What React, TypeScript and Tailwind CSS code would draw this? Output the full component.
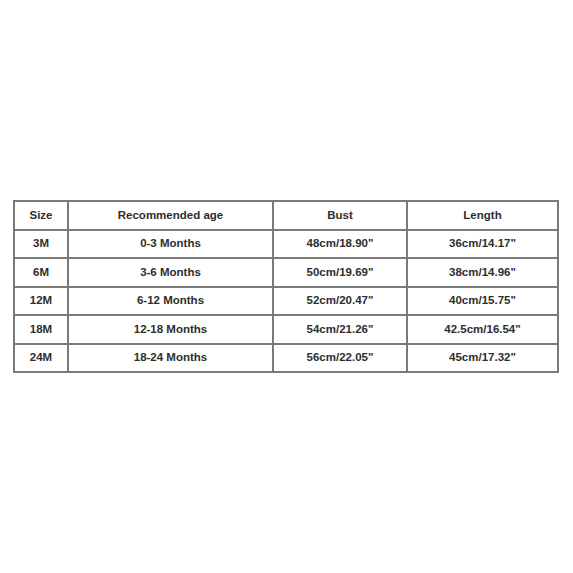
const rows = [
  ['3M', '0-3 Months', '48cm/18.90"', '36cm/14.17"'],
  ['6M', '3-6 Months', '50cm/19.69"', '38cm/14.96"'],
  ['12M', '6-12 Months', '52cm/20.47"', '40cm/15.75"'],
  ['18M', '12-18 Months', '54cm/21.26"', '42.5cm/16.54"'],
  ['24M', '18-24 Months', '56cm/22.05"', '45cm/17.32"'],
];

const head = ['Size', 'Recommended age', 'Bust', 'Length'];

export default function App() {
  return (
    <div className="w-[573px] h-[573px] bg-white pt-[200px] pl-[13px] font-['Liberation_Sans',Arial,sans-serif]">
      <table className="border-collapse table-fixed w-[544px] text-[11.5px] font-bold text-[#2e2e2e]">
        <colgroup>
          <col className="w-[54px]" />
          <col className="w-[205px]" />
          <col className="w-[134px]" />
          <col className="w-[151px]" />
        </colgroup>
        <thead>
          <tr className="h-[28.5px]">
            {head.map((h) => (
              <th key={h} className="border-2 border-[#7a7a7a] p-0 text-center align-middle font-bold">
                {h}
              </th>
            ))}
          </tr>
        </thead>
        <tbody>
          {rows.map((r) => (
            <tr key={r[0]} className="h-[28.5px]">
              {r.map((c, i) => (
                <td key={i} className="border-2 border-[#7a7a7a] p-0 text-center align-middle">
                  {c}
                </td>
              ))}
            </tr>
          ))}
        </tbody>
      </table>
    </div>
  );
}
